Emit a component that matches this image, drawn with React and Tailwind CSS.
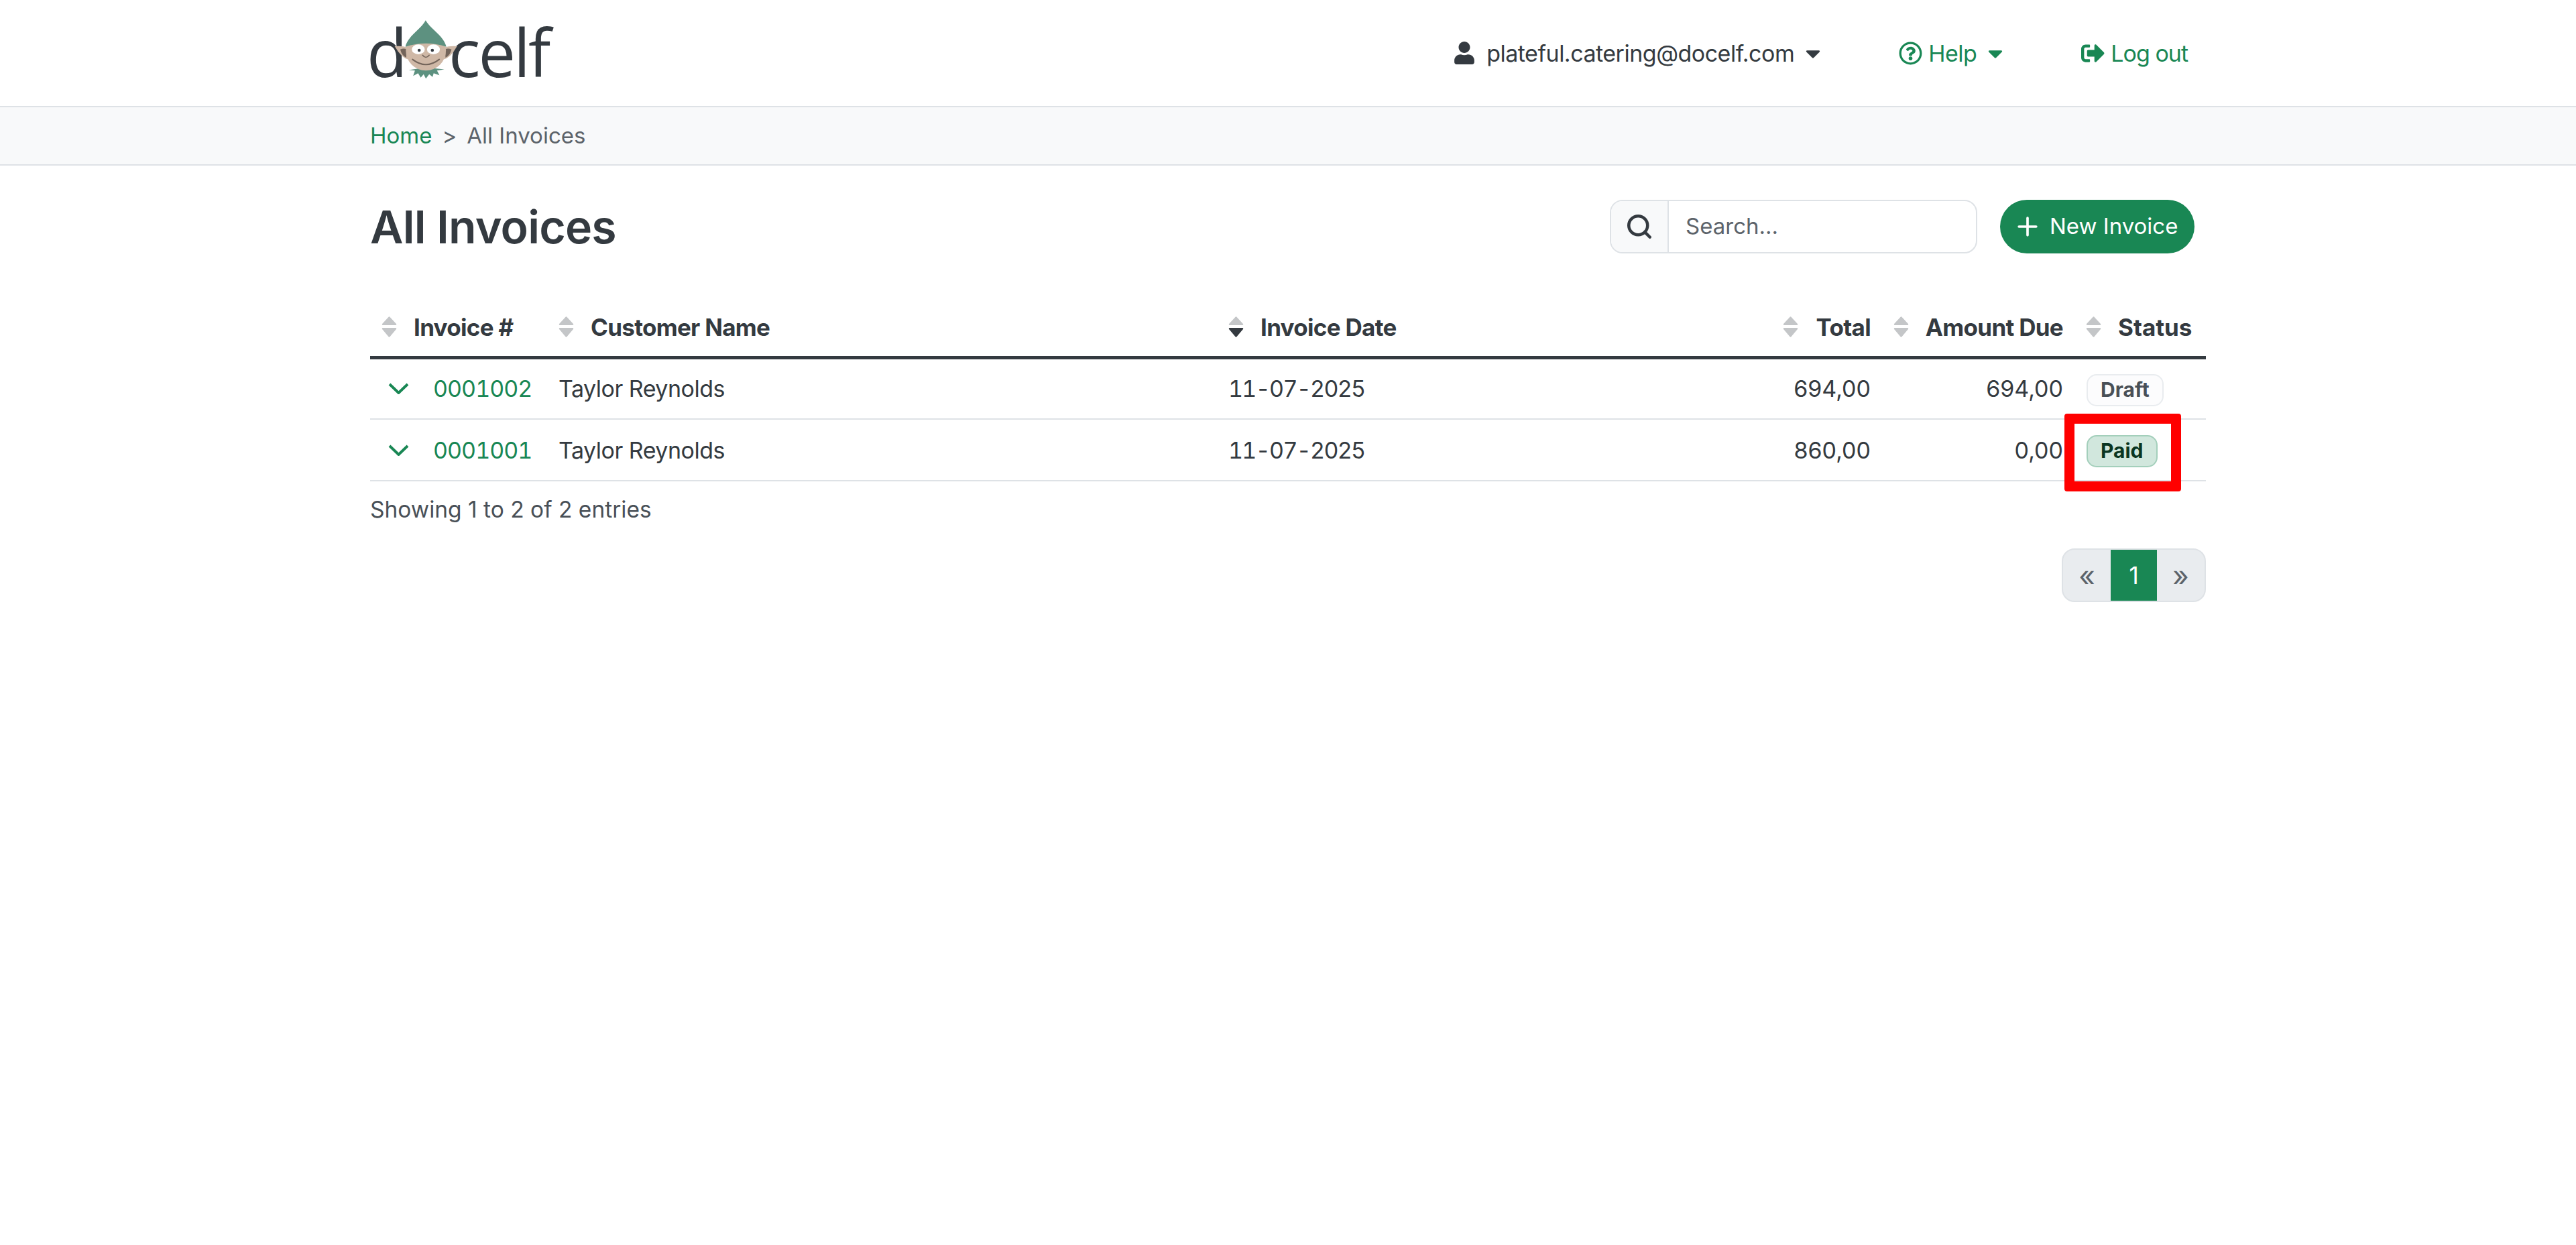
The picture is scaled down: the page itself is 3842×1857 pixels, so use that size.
import React from 'react'
import { FaCaretDown, FaRegQuestionCircle, FaSignOutAlt, FaUser } from 'react-icons/fa'
import { Plus, Search } from 'lucide-react'

const rows = [
  { id: '0001002', customer: 'Taylor Reynolds', date: '11-07-2025', total: '694,00', due: '694,00', status: 'Draft' },
  { id: '0001001', customer: 'Taylor Reynolds', date: '11-07-2025', total: '860,00', due: '0,00', status: 'Paid' },
]

function SortIcon({ active }) {
  return (
    <svg viewBox="0 0 23 32" className="h-[32px] w-[23px] shrink-0">
      <path d="M11.5 1.5 L21 11.75 H2 Z" fill="#c4c6c8" stroke="#c4c6c8" strokeWidth="2.5" strokeLinejoin="round" />
      <path
        d="M2 18.25 H21 L11.5 29.5 Z"
        fill={active ? '#343a40' : '#c4c6c8'}
        stroke={active ? '#343a40' : '#c4c6c8'}
        strokeWidth="2.5"
        strokeLinejoin="round"
      />
    </svg>
  )
}

function Logo() {
  return (
    <div className="relative h-[124px] w-[280px] font-['Open_Sans',sans-serif] text-[99px] font-medium leading-[124px] text-[#343a40]">
      <span className="absolute left-[-5px] top-[-2px]">d</span>
      <span className="absolute left-[117px] top-[-2px] tracking-[-3px]">celf</span>
      {/* elf head sits where the o would be */}
      <svg viewBox="140 40 295 270" className="absolute left-[35px] top-[11px] h-[90px] w-[98px]">
        <path d="M208 270 L236 272 L228 296 L250 284 L262 304 L275 289 L285 308 L300 289 L315 301 L320 284 L346 293 L335 272 L368 267 L285 258 Z" fill="#5d9180" />
        <path d="M145 163 Q175 160 205 168 L205 222 Q175 215 145 163 Z" fill="#cfb8a6" />
        <path d="M425 163 Q395 160 365 168 L365 222 Q395 215 425 163 Z" fill="#cfb8a6" />
        <path d="M170 177 Q186 170 197 176 L197 214 Q176 204 170 177 Z" fill="#73645a" />
        <path d="M400 177 Q384 170 373 176 L373 214 Q394 204 400 177 Z" fill="#73645a" />
        <circle cx="285" cy="182" r="90" fill="#cfb8a6" />
        <path d="M193 165 C205 115 260 90 284 46 C310 90 365 115 377 165 Q285 135 193 165 Z" fill="#5d9180" />
        <ellipse cx="251" cy="177" rx="29" ry="22" fill="#fff" />
        <ellipse cx="319" cy="177" rx="29" ry="22" fill="#fff" />
        <circle cx="255" cy="181" r="7" fill="#343a40" />
        <circle cx="314" cy="181" r="7" fill="#343a40" />
        <path d="M270 203 Q285 222 300 203" fill="none" stroke="#73645a" strokeWidth="5" strokeLinecap="round" />
        <path d="M225 222 Q285 268 345 222" fill="none" stroke="#73645a" strokeWidth="6" strokeLinecap="round" />
      </svg>
    </div>
  )
}

function Header() {
  return (
    <header className="h-[160px] border-b-[2.5px] border-[#dee2e6] bg-white">
      <div className="mx-auto flex h-full w-[2738px] items-center justify-between">
        <Logo />
        <nav className="flex items-center pr-[27px] text-[34px] tracking-[-0.5px]">
          <a className="flex items-center text-[#343a40]">
            <FaUser className="mr-[18px] h-[34px] w-[30px]" />
            plateful.catering@docelf.com
            <FaCaretDown className="ml-[14px] h-[35px] w-[28px]" />
          </a>
          <a className="ml-[114px] flex items-center text-[#198754]">
            <FaRegQuestionCircle className="mr-[9px] h-[35px] w-[35px]" />
            Help
            <FaCaretDown className="ml-[14px] h-[35px] w-[28px]" />
          </a>
          <a className="ml-[114px] flex items-center tracking-[-1px] text-[#198754]">
            <FaSignOutAlt className="mr-[9px] h-[35px] w-[35px]" />
            Log out
          </a>
        </nav>
      </div>
    </header>
  )
}

function Breadcrumb() {
  return (
    <div className="h-[87px] border-b-[2.5px] border-[#dee2e6] bg-[#f8f9fa]">
      <div className="mx-auto flex h-full w-[2738px] items-center text-[33px] text-[#5c636a]">
        <a className="text-[#198754]">Home</a>
        <span className="mx-[15px]">&gt;</span>
        <span>All Invoices</span>
      </div>
    </div>
  )
}

function Toolbar() {
  return (
    <div className="flex h-[80px] items-center justify-between pr-[17px]">
      <h1 className="text-[68px] font-semibold tracking-[-0.8px] text-[#343a40]">All Invoices</h1>
      <div className="flex items-center gap-[34px]">
        <div className="flex h-[80px] w-[548px] overflow-hidden rounded-[19px] border-[2.5px] border-[#dee2e6] bg-white">
          <span className="flex w-[86px] items-center justify-center border-r-[2.5px] border-[#dee2e6] bg-[#f8f9fa] text-[#343a40]">
            <Search size={42} strokeWidth={2.6} />
          </span>
          <input
            placeholder="Search..."
            className="min-w-0 flex-1 px-[25px] text-[33px] text-[#343a40] outline-none placeholder:text-[#5c636a]"
          />
        </div>
        <button className="flex h-[80px] w-[290px] items-center gap-[11px] rounded-[40px] bg-[#198754] pl-[19px] text-[33px] text-white">
          <Plus size={44} strokeWidth={2} />
          New Invoice
        </button>
      </div>
    </div>
  )
}

function HeadCell({ label, active, right, labelClass = 'tracking-[-0.7px]' }) {
  return (
    <th className="px-[17px] pb-[16px] align-middle font-bold">
      <div className={`flex items-center ${right ? 'justify-between' : 'gap-[25px]'}`}>
        <SortIcon active={active} />
        <span className={labelClass}>{label}</span>
      </div>
    </th>
  )
}

function StatusBadge({ status }) {
  const paid = status === 'Paid'
  return (
    <span
      className={`ml-[1px] inline-flex h-[48px] items-center rounded-[15px] border-[2.5px] px-[19px] text-[30px] font-bold ${
        paid ? 'border-[#a3cfbb] bg-[#d1e7dd] text-[#0a3622]' : 'border-[#e9ecef] bg-[#fcfcfd] text-[#495057]'
      }`}
    >
      {status}
    </span>
  )
}

function InvoiceTable() {
  return (
    <table className="mt-[84px] w-full table-fixed border-collapse text-[35px] text-[#343a40]">
      <colgroup>
        <col className="w-[264px]" />
        <col className="w-[999px]" />
        <col className="w-[827px]" />
        <col className="w-[165px]" />
        <col className="w-[287px]" />
        <col className="w-[196px]" />
      </colgroup>
      <thead>
        <tr className="border-b-[5px] border-[#343a40]">
          <HeadCell label="Invoice #" />
          <HeadCell label="Customer Name" />
          <HeadCell label="Invoice Date" active />
          <HeadCell label="Total" right />
          <HeadCell label="Amount Due" right />
          <HeadCell label="Status" labelClass="tracking-normal" />
        </tr>
      </thead>
      <tbody>
        {rows.map(row => (
          <tr key={row.id} className="h-[92px] border-b-[2.5px] border-[#dee2e6] text-[34px]">
            <td className="px-[17px]">
              <div className="flex items-center">
                <svg viewBox="0 0 31 17" fill="none" className="ml-[10px] mr-[36px] h-[17px] w-[31px] shrink-0">
                  <path d="M2 2 L15.5 15 L29 2" stroke="#198754" strokeWidth="4" />
                </svg>
                <a className="tracking-[-1px] text-[#198754] tabular-nums">{row.id}</a>
              </div>
            </td>
            <td className="px-[17px] tracking-[-0.5px]">{row.customer}</td>
            <td className="px-[17px] tracking-[-1.7px] tabular-nums">{row.date}</td>
            <td className="px-[17px] text-right">{row.total}</td>
            <td className="px-[17px] text-right">{row.due}</td>
            <td className="px-[17px]">
              <StatusBadge status={row.status} />
            </td>
          </tr>
        ))}
      </tbody>
    </table>
  )
}

function Pagination() {
  return (
    <div className="mt-[33px] flex justify-end">
      <div className="flex h-[80px] overflow-hidden rounded-[19px] border-[2.5px] border-[#dee2e6] bg-[#e9ecef] text-[35px] text-[#5c636a]">
        <span className="flex w-[71px] items-center justify-center text-[42px]">«</span>
        <span className="flex w-[69px] items-center justify-center bg-[#198754] text-white">1</span>
        <span className="flex w-[71px] items-center justify-center text-[42px]">»</span>
      </div>
    </div>
  )
}

export default function App() {
  return (
    <div className="relative min-h-screen bg-white font-['Inter',sans-serif]">
      <Header />
      <Breadcrumb />
      <main className="mx-auto w-[2738px] pt-[51px]">
        <Toolbar />
        <InvoiceTable />
        <p className="mt-[17px] text-[33.5px] text-[#495057]">Showing 1 to 2 of 2 entries</p>
        <Pagination />
      </main>
      {/* red annotation drawn over the page */}
      <div className="absolute left-[3079px] top-[617px] h-[116px] w-[174px] rounded-[4px] border-[15px] border-[#ff0000]" />
    </div>
  )
}
